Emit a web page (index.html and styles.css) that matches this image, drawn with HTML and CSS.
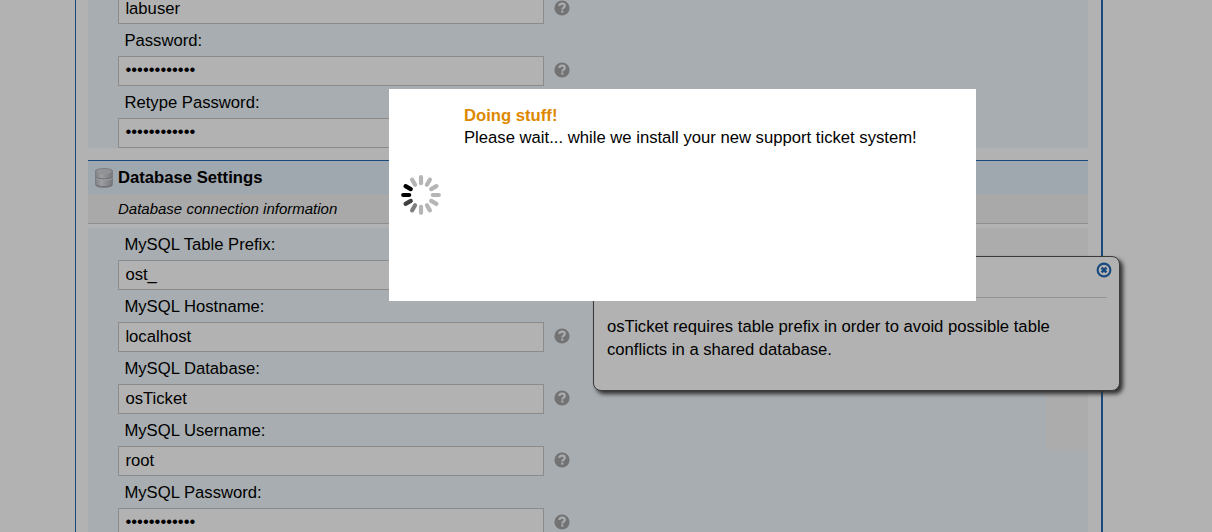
FILE: index.html
```html
<!DOCTYPE html>
<html lang="en">
<head>
<meta charset="utf-8">
<title>osTicket Installer</title>
<link rel="stylesheet" href="styles.css">
</head>
<body>
<svg class="defs" width="0" height="0">
  <symbol id="help" viewBox="0 0 16 16">
    <circle cx="8" cy="8" r="7.6" fill="#a5a5a5"/>
    <path d="M5.4 6.1C5.4 4.4 6.5 3.7 8.1 3.7S10.8 4.6 10.8 6C10.8 7.7 8.3 7.7 8.3 9.6" fill="none" stroke="#f0f8fd" stroke-width="2.2"/>
    <rect x="7.2" y="10.5" width="2.2" height="2.1" fill="#f0f8fd"/>
  </symbol>
</svg>
<main class="wizard">
  <section class="fields fields-top">
    <div class="row"><div class="line"><div class="input">labuser</div><svg class="help"><use href="#help"/></svg></div></div>
    <div class="row"><label>Password:</label><div class="line"><div class="input dots">••••••••••••</div><svg class="help"><use href="#help"/></svg></div></div>
    <div class="row"><label>Retype Password:</label><div class="line"><div class="input dots">••••••••••••</div><svg class="help"><use href="#help"/></svg></div></div>
  </section>
  <header class="head">
    <svg class="db" viewBox="0 0 18 20">
      <defs><linearGradient id="metal"><stop offset="0" stop-color="#b8bbc0"/><stop offset=".35" stop-color="#dfe1e4"/><stop offset="1" stop-color="#a9adb3"/></linearGradient></defs>
      <path d="M.5 3C.5 -.2 17.5 -.2 17.5 3V16.8C17.5 20.2 .5 20.2 .5 16.8Z" fill="url(#metal)" stroke="#b0b4ba"/>
      <ellipse cx="9" cy="3.6" rx="7.6" ry="2.6" fill="#d0d3d7"/>
      <path d="M.8 9C2 11.6 16 11.6 17.2 9" fill="none" stroke="#979ba1"/>
      <path d="M.8 10.1C2 12.7 16 12.7 17.2 10.1" fill="none" stroke="#e4e6e9"/>
      <path d="M1 16.6C2.5 19.4 15.5 19.4 17 16.6" fill="none" stroke="#9b9fa5"/>
    </svg>
    <h1>Database Settings</h1>
  </header>
  <p class="sub">Database connection information</p>
  <section class="fields fields-db">
    <div class="row"><label>MySQL Table Prefix:</label><div class="line"><div class="input">ost_</div><svg class="help"><use href="#help"/></svg></div></div>
    <div class="row"><label>MySQL Hostname:</label><div class="line"><div class="input">localhost</div><svg class="help"><use href="#help"/></svg></div></div>
    <div class="row"><label>MySQL Database:</label><div class="line"><div class="input">osTicket</div><svg class="help"><use href="#help"/></svg></div></div>
    <div class="row"><label>MySQL Username:</label><div class="line"><div class="input">root</div><svg class="help"><use href="#help"/></svg></div></div>
    <div class="row"><label>MySQL Password:</label><div class="line"><div class="input dots">••••••••••••</div><svg class="help"><use href="#help"/></svg></div></div>
  </section>
</main>
<aside class="tip">
  <div class="tip-head">
    <svg class="close" viewBox="0 0 16 16"><circle cx="8" cy="8" r="6.4" fill="none" stroke="#236ab4" stroke-width="2.1"/><path d="M5.6 5.6L10.4 10.4M10.4 5.6L5.6 10.4" stroke="#236ab4" stroke-width="2.6"/></svg>
  </div>
  <p>osTicket requires table prefix in order to avoid possible table<br>conflicts in a shared database.</p>
</aside>
<div class="overlay"></div>
<div class="loading">
  <svg class="spinner" viewBox="-20 -20 40 40" stroke-width="4.2" stroke-linecap="round">
    <g stroke="#b5b5b5">
      <path d="M0-11.8V-17.8"/><path d="M0-11.8V-17.8" transform="rotate(30)"/><path d="M0-11.8V-17.8" transform="rotate(60)"/><path d="M0-11.8V-17.8" transform="rotate(90)"/><path d="M0-11.8V-17.8" transform="rotate(120)"/><path d="M0-11.8V-17.8" transform="rotate(150)"/><path d="M0-11.8V-17.8" transform="rotate(180)"/><path d="M0-11.8V-17.8" transform="rotate(330)"/>
    </g>
    <path d="M0-11.8V-17.8" transform="rotate(210)" stroke="#808080"/>
    <path d="M0-11.8V-17.8" transform="rotate(240)" stroke="#404040"/>
    <path d="M0-11.8V-17.8" transform="rotate(270)" stroke="#000"/>
    <path d="M0-11.8V-17.8" transform="rotate(300)" stroke="#000"/>
  </svg>
  <div class="message"><h4>Doing stuff!</h4><p>Please wait... while we install your new support ticket system!</p></div>
</div>
</body>
</html>
```
FILE: styles.css
```css
* { box-sizing: border-box; }
body { margin: 0; height: 532px; overflow: hidden; background: #fff; color: #000; font: 16.66px/22px "Liberation Sans", Arial, sans-serif; }
h1, h4, p { margin: 0; }
.defs { display: block; }
.wizard { width: 1028px; height: 532px; margin-left: 75px; padding: 0 13px 0 12px; border-left: 1px solid #236ab4; border-right: 2px solid #236ab4; overflow: hidden; }
.fields { width: 1000px; background: #f0f8fd; }
.fields-top { margin-top: -6px; margin-bottom: 12px; }
.fields-db {
  background:
    linear-gradient(#f7f7f7, #f7f7f7) 888px 0 / 112px 60px no-repeat,
    linear-gradient(#f7f7f7, #f7f7f7) 958px 60px / 42px 164px no-repeat,
    #f0f8fd;
}
.row label { display: block; height: 32px; padding: 6px 0 0 36.4px; }
.line { display: flex; align-items: center; padding-left: 30px; gap: 10px; }
.input { width: 426px; height: 30px; padding: 3px 6.4px; border: 1px solid #c8c8c8; background: #fff; }
.dots { padding-top: 2px; }
.help { width: 16px; height: 16px; margin-top: -2px; }
.head { display: flex; align-items: center; gap: 5px; width: 1000px; height: 34px; padding-left: 7px; border-top: 1px solid #236ab4; background: #e4effb; }
.head h1 { font-size: 16.66px; line-height: 22px; }
.db { width: 18px; height: 20px; }
.sub { width: 1000px; height: 30px; margin-bottom: 4px; padding: 4px 0 0 30px; border-bottom: 1px solid #ccc; background: #f3f3f3; font-size: 15px; font-style: italic; }
.tip { position: absolute; left: 593px; top: 256px; width: 527px; height: 135px; padding: 0 12px 0 13px; border: 1px solid #555; border-radius: 8px; background: #fff; box-shadow: 3px 3px 4px #444; line-height: 23px; }
.tip-head { display: flex; justify-content: flex-end; height: 41px; margin-bottom: 17px; padding-top: 5px; border-bottom: 1px solid #d5d5d5; }
.close { width: 16px; height: 16px; margin-right: -5px; }
.overlay { position: absolute; inset: 0; background: rgba(0, 0, 0, .3); }
.loading { position: absolute; left: 389px; top: 89px; display: flex; width: 587px; height: 212px; padding: 0 12px; gap: 23px; align-items: center; background: #fff; }
.spinner { width: 40px; height: 40px; }
.message { align-self: flex-start; padding-top: 16px; }
.message h4 { color: #d80; font-size: 16.66px; line-height: 22px; }
```
